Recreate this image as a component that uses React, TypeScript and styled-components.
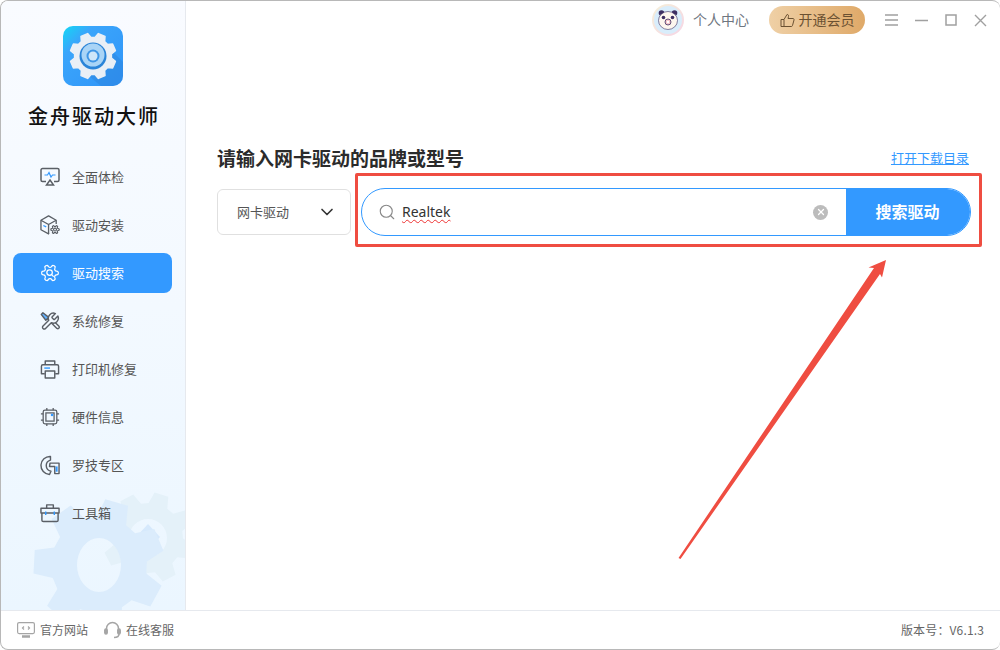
import styled, { createGlobalStyle } from "styled-components";
import { ChevronDown, Search, X } from "lucide-react";

const GlobalStyle = createGlobalStyle`
  html, body {
    margin: 0;
    padding: 0;
    background: #fff;
    font-family: "Noto Sans CJK SC", "Noto Sans", sans-serif;
  }
`;

const Window = styled.div`
  position: relative;
  box-sizing: border-box;
  width: 1000px;
  height: 650px;
  display: flex;
  flex-direction: column;
  background: #fff;
  border: 1px solid #b8b8b8;
  border-right: 0;
  border-radius: 8px;
  overflow: hidden;
`;

const Body = styled.div`
  flex: 1;
  display: flex;
  min-height: 0;
`;

const Sidebar = styled.aside`
  position: relative;
  box-sizing: border-box;
  width: 185px;
  flex: none;
  display: flex;
  flex-direction: column;
  align-items: center;
  padding-top: 25px;
  background: linear-gradient(180deg, #f9fbff 0%, #f3f9ff 50%, #ebf6ff 100%);
  border-right: 1px solid #e6e9ee;
  overflow: hidden;
`;

const Logo = styled.div`
  width: 60px;
  height: 60px;
  flex: none;
  border-radius: 10px;
  overflow: hidden;
  svg {
    display: block;
  }
`;

const Brand = styled.div`
  margin-top: 16px;
  margin-right: -2px;
  font-size: 20px;
  line-height: 28px;
  letter-spacing: 2px;
  color: #111;
  font-weight: 500;
`;

const NavList = styled.nav`
  position: relative;
  z-index: 1;
  margin-top: 27px;
  width: 159px;
  margin-left: -1px;
  display: flex;
  flex-direction: column;
  gap: 8px;
`;

const NavItem = styled.div<{ $active?: boolean }>`
  height: 40px;
  display: flex;
  align-items: center;
  gap: 12px;
  padding-left: 27px;
  border-radius: 8px;
  font-size: 13px;
  color: ${(p) => (p.$active ? "#fff" : "#555")};
  background: ${(p) => (p.$active ? "#3399ff" : "transparent")};
`;

const NavIcon = styled.span`
  width: 20px;
  height: 22px;
  flex: none;
  display: flex;
  align-items: center;
  justify-content: center;
`;

const NavLabel = styled.span`
  margin-top: -2px;
`;

const GearDecor = styled.svg`
  position: absolute;
  left: 0;
  bottom: 0;
`;

const Main = styled.main`
  flex: 1;
  min-width: 0;
  display: flex;
  flex-direction: column;
`;

const TopBar = styled.header`
  height: 38px;
  display: flex;
  align-items: center;
  justify-content: flex-end;
  padding-right: 13px;
  color: #8a8a8a;
`;

const Avatar = styled.div`
  width: 32px;
  height: 32px;
  svg {
    display: block;
  }
`;

const UserName = styled.span`
  margin: -2px 0 0 9px;
  font-size: 14px;
  color: #6f7680;
`;

const VipButton = styled.div`
  margin-left: 20px;
  width: 96px;
  height: 28px;
  display: flex;
  align-items: center;
  justify-content: center;
  gap: 4px;
  border-radius: 14px;
  font-size: 14px;
  color: #6b5132;
  background: linear-gradient(90deg, #efd0a6 0%, #dfa968 100%);
`;

const VipLabel = styled.span`
  margin-top: -2px;
`;

const WinButtons = styled.div`
  margin-left: 20px;
  display: flex;
  align-items: center;
  gap: 17px;
  svg {
    display: block;
  }
`;

const Content = styled.section`
  padding: 105px 29px 0 31px;
`;

const HeadRow = styled.div`
  display: flex;
  align-items: center;
  justify-content: space-between;
  height: 26px;
`;

const Heading = styled.h1`
  margin: 0;
  font-size: 19px;
  font-weight: 700;
  color: #2b2b2b;
`;

const FolderLink = styled.a`
  margin-right: 2px;
  font-size: 13px;
  color: #3399ff;
  text-decoration: underline;
`;

const SearchRow = styled.div`
  margin-top: 18px;
  display: flex;
  align-items: center;
  gap: 10px;
`;

const Select = styled.div`
  box-sizing: border-box;
  width: 134px;
  height: 46px;
  display: flex;
  align-items: center;
  justify-content: space-between;
  padding: 0 13px 0 19px;
  border: 1px solid #e0e0e0;
  border-radius: 6px;
  font-size: 13px;
  color: #555;
`;

const SelectLabel = styled.span`
  margin-top: -2px;
`;

const SearchBox = styled.div`
  box-sizing: border-box;
  flex: 1;
  height: 48px;
  display: flex;
  align-items: center;
  border: 1px solid #3399ff;
  border-radius: 24px;
  overflow: hidden;
`;

const SearchInput = styled.div`
  flex: 1;
  display: flex;
  align-items: center;
  padding-left: 16px;
  color: #888;
`;

const SearchText = styled.span`
  margin: -2px 0 0 6px;
  font-family: "Noto Sans", sans-serif;
  font-size: 14px;
  color: #333;
  text-decoration: underline wavy #e33;
  text-decoration-thickness: 1px;
  text-underline-offset: 2px;
`;

const ClearButton = styled.div`
  width: 15px;
  height: 15px;
  margin-right: 19px;
  display: flex;
  align-items: center;
  justify-content: center;
  border-radius: 50%;
  background: #bcbcbc;
  color: #fff;
`;

const SearchButton = styled.div`
  box-sizing: border-box;
  width: 125px;
  height: 48px;
  margin: -1px;
  padding-right: 2px;
  display: flex;
  align-items: center;
  justify-content: center;
  font-size: 16px;
  font-weight: 700;
  color: #fff;
  background: #3399ff;
`;

const SearchButtonLabel = styled.span`
  margin-top: -2px;
`;

const Footer = styled.footer`
  box-sizing: border-box;
  height: 39px;
  flex: none;
  display: flex;
  align-items: center;
  padding: 0 16px 0 16px;
  border-top: 1px solid #e6e9ee;
  font-size: 12px;
  color: #666;
`;

const FooterLink = styled.div`
  display: flex;
  align-items: center;
  gap: 5px;
  margin-right: 16px;
`;

const FooterText = styled.span`
  margin-top: -2px;
`;

const Version = styled.div`
  margin: -2px 0 0 auto;
  color: #666;
  letter-spacing: 0.15px;
`;

const HighlightBox = styled.div`
  position: absolute;
  left: 354px;
  top: 172px;
  box-sizing: border-box;
  width: 627px;
  height: 74px;
  border: 3px solid #ef4d41;
  border-radius: 2px;
`;

const ArrowLayer = styled.svg`
  position: absolute;
  left: 0;
  top: 0;
  pointer-events: none;
`;

// builds a gear outline around (cx, cy), holeY lets the hole be an ellipse
function gearPath(cx: number, cy: number, outer: number, inner: number, hole: number, teeth: number, turn = 0, holeY = hole) {
  const step = (Math.PI * 2) / teeth;
  const pts: string[] = [];
  for (let i = 0; i < teeth; i++) {
    const a = turn + i * step;
    const list: [number, number][] = [
      [inner, a - step * 0.36],
      [outer, a - step * 0.2],
      [outer, a + step * 0.2],
      [inner, a + step * 0.36],
    ];
    list.forEach(([r, t]) => {
      pts.push(`${(cx + r * Math.cos(t)).toFixed(1)} ${(cy + r * Math.sin(t)).toFixed(1)}`);
    });
  }
  const ring = `M${cx - hole} ${cy}a${hole} ${holeY} 0 1 0 ${hole * 2} 0a${hole} ${holeY} 0 1 0 ${-hole * 2} 0Z`;
  return `M${pts.join("L")}Z${ring}`;
}

const gearOutline =
  "M12.22 2h-.44a2 2 0 0 0-2 2v.18a2 2 0 0 1-1 1.73l-.43.25a2 2 0 0 1-2 0l-.15-.08a2 2 0 0 0-2.73.73l-.22.38a2 2 0 0 0 .73 2.73l.15.1a2 2 0 0 1 1 1.72v.51a2 2 0 0 1-1 1.74l-.15.09a2 2 0 0 0-.73 2.73l.22.38a2 2 0 0 0 2.73.73l.15-.08a2 2 0 0 1 2 0l.43.25a2 2 0 0 1 1 1.73V20a2 2 0 0 0 2 2h.44a2 2 0 0 0 2-2v-.18a2 2 0 0 1 1-1.73l.43-.25a2 2 0 0 1 2 0l.15.08a2 2 0 0 0 2.73-.73l.22-.39a2 2 0 0 0-.73-2.73l-.15-.08a2 2 0 0 1-1-1.74v-.5a2 2 0 0 1 1-1.74l.15-.09a2 2 0 0 0 .73-2.73l-.22-.38a2 2 0 0 0-2.73-.73l-.15.08a2 2 0 0 1-2 0l-.43-.25a2 2 0 0 1-1-1.73V4a2 2 0 0 0-2-2z";

const LogoIcon = () => (
  <svg width="60" height="60" viewBox="0 0 60 60">
    <defs>
      <linearGradient id="logoBg" x1="0" y1="0" x2="1" y2="1">
        <stop offset="0" stopColor="#12d8f5" />
        <stop offset="0.25" stopColor="#3aa5fb" />
        <stop offset="1" stopColor="#3094f8" />
      </linearGradient>
    </defs>
    <rect width="60" height="60" fill="url(#logoBg)" />
    <path d="M46 22L60 36V60H38L14 40Z" fill="#2a7fd6" opacity="0.4" />
    <path d={gearPath(30, 30, 23, 18.5, 0, 8, Math.PI / 8)} fill="#e9eff6" stroke="#e9eff6" strokeWidth="1.5" strokeLinejoin="round" />
    <circle cx="30" cy="30" r="13.5" fill="#2a84d8" />
    <circle cx="30" cy="29" r="11.5" fill="#a9d4f6" />
    <circle cx="30" cy="30" r="6.5" fill="#3f96e6" />
    <circle cx="30" cy="30" r="4.5" fill="#cfe6f9" />
  </svg>
);

const stroke = "#5a5f66";
const accent = "#3399ff";

const MonitorIcon = () => (
  <svg width="20" height="20" viewBox="0 0 20 20" fill="none" stroke={stroke} strokeWidth="1.5">
    <path d="M6 14.500H2.500a1.500 1.500 0 0 1-1.500-1.500V3a1.500 1.500 0 0 1 1.500-1.500h15A1.500 1.500 0 0 1 19 3v10a1.500 1.500 0 0 1-1.500 1.500H14" />
    <path d="M4.500 8h3l1.500-2.500 2 4.500 1.500-2h3" stroke={accent} strokeWidth="1.200" />
    <path d="M10 13l3.500 5h-7z" />
  </svg>
);

const BoxIcon = () => (
  <svg width="21" height="22" viewBox="0 0 21 22" fill="none" stroke={stroke} strokeWidth="1.400" strokeLinejoin="round">
    <path d="M9.500 20.500L1 16V6l8-4.500L17 6v4" />
    <path d="M1 6l8 4.500L17 6M9 10.500v10" />
    <path d="M3.500 11.500l3 1.500" stroke={accent} />
    <g transform="translate(10.500 10.500) scale(0.44)" strokeWidth="2.800">
      <path d={gearOutline} transform="rotate(90 12 12)" fill="#f6faff" />
      <circle cx="12" cy="12" r="3.500" />
    </g>
  </svg>
);

const GearSearchIcon = () => (
  <svg width="22" height="22" viewBox="0 0 24 24" fill="none" stroke="#fff" strokeWidth="1.500" strokeLinejoin="round">
    <path d={gearOutline} transform="rotate(90 12 12)" />
    <circle cx="11.500" cy="11.500" r="3.300" />
    <path d="M14 14l2 2" strokeLinecap="round" />
  </svg>
);

const ToolsIcon = () => (
  <svg width="21" height="21" viewBox="0 0 24 24" fill="none" stroke={stroke} strokeWidth="1.700" strokeLinejoin="round">
    <path d="M9 9l11.300 11.300a1.800 1.800 0 0 0 2.500-2.500L11.500 6.500" />
    <path d="M3.500 1.500L1.500 3.500l5.500 7 3.500-3.500z" fill={accent} fillOpacity="0.75" />
    <path d="M14.700 6.300a1 1 0 0 0 0 1.400l1.600 1.600a1 1 0 0 0 1.400 0l3.770-3.770a6 6 0 0 1-7.940 7.940l-6.910 6.910a2.120 2.120 0 0 1-3-3l6.910-6.910a6 6 0 0 1 7.940-7.940l-3.760 3.760z" fill="#f3f9ff" />
  </svg>
);

const PrinterIcon = () => (
  <svg width="21" height="21" viewBox="0 0 21 21" fill="none" stroke={stroke} strokeWidth="1.500" strokeLinejoin="round">
    <path d="M5.500 5.500V1.500h10v4" />
    <path d="M5 15H1.500V7A1.500 1.500 0 0 1 3 5.500h15A1.500 1.500 0 0 1 19.500 7v8H16" />
    <path d="M5.500 12h10v7.500h-10z" />
    <path d="M4.500 9h6" stroke={accent} />
  </svg>
);

const ChipIcon = () => (
  <svg width="22" height="22" viewBox="0 0 22 22" fill="none" stroke={stroke} strokeWidth="1.400">
    <rect x="3.500" y="3.500" width="15" height="15" rx="2" />
    <rect x="6.500" y="6.500" width="9" height="9" />
    <path d="M7.500 1v2.500M14.500 1v2.500M7.500 18.500v2.500M14.500 18.500v2.500M1 7.500h2.500M1 14.500h2.500M18.500 7.500h2.500M18.500 14.500h2.500" />
    <rect x="12" y="7.500" width="2.500" height="2.500" fill={accent} stroke="none" />
  </svg>
);

const LogiIcon = () => (
  <svg width="21" height="21" viewBox="0 0 21 21" fill="none" stroke={stroke} strokeWidth="1.500" strokeLinejoin="round">
    <path d="M11 1A9.500 9.500 0 0 0 10 20l1.500-3.500A6 6 0 0 1 11 4.800z" />
    <path d="M10.500 8H20v11h-4.500v-7.500H10z" />
    <path d="M17.500 11.500v5.500" stroke={accent} strokeWidth="2" />
  </svg>
);

const ToolboxIcon = () => (
  <svg width="21" height="20" viewBox="0 0 21 20" fill="none" stroke={stroke} strokeWidth="1.500" strokeLinejoin="round">
    <path d="M7 5V1.500h7V5" />
    <path d="M1 5h19v5H1z" />
    <path d="M2 10v7.500A1.500 1.500 0 0 0 3.500 19h14a1.500 1.500 0 0 0 1.500-1.500V10" />
    <path d="M6 8.500v3.500M15 8.500v3.500" stroke={accent} />
  </svg>
);

const PandaAvatar = () => (
  <svg width="32" height="32" viewBox="0 0 32 32">
    <defs>
      <linearGradient id="avatarRing" x1="0" y1="0" x2="1" y2="1">
        <stop offset="0" stopColor="#f5f0d8" />
        <stop offset="1" stopColor="#f6d5e6" />
      </linearGradient>
    </defs>
    <circle cx="16" cy="16" r="16" fill="url(#avatarRing)" />
    <circle cx="16" cy="16" r="14" fill="#d9edfb" />
    <circle cx="9.500" cy="9" r="2.800" fill="#3d2f63" />
    <circle cx="22.500" cy="9" r="2.800" fill="#3d2f63" />
    <ellipse cx="16" cy="16.500" rx="9.500" ry="9" fill="#fdf6ee" stroke="#3d2f63" strokeWidth="0.600" />
    <circle cx="11.500" cy="13.500" r="1.800" fill="#3d2f63" />
    <circle cx="20.500" cy="13.500" r="1.800" fill="#3d2f63" />
    <circle cx="16" cy="18" r="3" fill="#f3c4c8" stroke="#3d2f63" strokeWidth="0.800" />
    <circle cx="16" cy="18" r="1.200" fill="#fff" />
  </svg>
);

const ThumbIcon = () => (
  <svg width="15" height="15" viewBox="0 0 15 15" fill="none" stroke="#6b5132" strokeWidth="1" strokeLinejoin="round">
    <path d="M1 6.500h3v7H1z" />
    <path d="M4 6.500l3-5c1.200 0 1.800.8 1.500 2L8 5.500h5c.8 0 1.200.7 1 1.500l-1.500 5.500c-.2.700-.6 1-1.200 1H4" />
  </svg>
);

const MenuGlyph = () => (
  <svg width="13" height="12" viewBox="0 0 13 12" stroke="#a0a0a0" strokeWidth="1.500">
    <path d="M0 1h13M0 6h13M0 11h13" />
  </svg>
);

const MinGlyph = () => (
  <svg width="13" height="12" viewBox="0 0 13 12" stroke="#a0a0a0" strokeWidth="1.500">
    <path d="M0 6.500h13" />
  </svg>
);

const MaxGlyph = () => (
  <svg width="12" height="12" viewBox="0 0 12 12" fill="none" stroke="#a0a0a0" strokeWidth="1.500">
    <rect x="1" y="1" width="10" height="10" />
  </svg>
);

const CloseGlyph = () => (
  <svg width="13" height="13" viewBox="0 0 13 13" stroke="#a0a0a0" strokeWidth="1.400">
    <path d="M1 1l11 11M12 1L1 12" />
  </svg>
);

const SiteIcon = () => (
  <svg width="18" height="16" viewBox="0 0 18 16" fill="none" stroke="#a5a5a5" strokeWidth="1.200">
    <rect x="0.600" y="0.600" width="16.800" height="11" rx="1.500" />
    <path d="M7 4.500L5.500 6 7 7.500M11 4.500L12.500 6 11 7.500" />
    <path d="M5 14.500h8" strokeWidth="2.400" />
  </svg>
);

const HeadsetIcon = () => (
  <svg width="17" height="18" viewBox="0 0 17 18" fill="none" stroke="#a5a5a5" strokeWidth="1.500">
    <path d="M2.500 9V7.500a6 6 0 0 1 12 0V9" />
    <rect x="0.800" y="8" width="2.400" height="5" rx="1.200" fill="#a5a5a5" />
    <rect x="13.800" y="8" width="2.400" height="5" rx="1.200" fill="#a5a5a5" />
    <path d="M15 13c0 2-2 3.500-5 3.500" />
  </svg>
);

const navItems = [
  { label: "全面体检", icon: <MonitorIcon /> },
  { label: "驱动安装", icon: <BoxIcon /> },
  { label: "驱动搜索", icon: <GearSearchIcon />, active: true },
  { label: "系统修复", icon: <ToolsIcon /> },
  { label: "打印机修复", icon: <PrinterIcon /> },
  { label: "硬件信息", icon: <ChipIcon /> },
  { label: "罗技专区", icon: <LogiIcon /> },
  { label: "工具箱", icon: <ToolboxIcon /> },
];

const App = () => {
  return (
    <>
      <GlobalStyle />
      <Window>
        <Body>
          <Sidebar>
            <GearDecor width="184" height="130" viewBox="0 0 184 130">
              <path d={gearPath(147, 58, 46, 35, 19, 8, 0.3)} fill="#e4f1f9" fillRule="evenodd" />
              <path d="M147 44l12 13-12 13-12-13z" fill="#d6e9fc" />
              <path d={gearPath(98, 85, 66, 48, 22, 7, 0.5, 27)} fill="#dbecfc" fillRule="evenodd" />
            </GearDecor>
            <Logo>
              <LogoIcon />
            </Logo>
            <Brand>金舟驱动大师</Brand>
            <NavList>
              {navItems.map((item) => (
                <NavItem key={item.label} $active={item.active}>
                  <NavIcon>{item.icon}</NavIcon>
                  <NavLabel>{item.label}</NavLabel>
                </NavItem>
              ))}
            </NavList>
          </Sidebar>
          <Main>
            <TopBar>
              <Avatar>
                <PandaAvatar />
              </Avatar>
              <UserName>个人中心</UserName>
              <VipButton>
                <ThumbIcon />
                <VipLabel>开通会员</VipLabel>
              </VipButton>
              <WinButtons>
                <MenuGlyph />
                <MinGlyph />
                <MaxGlyph />
                <CloseGlyph />
              </WinButtons>
            </TopBar>
            <Content>
              <HeadRow>
                <Heading>请输入网卡驱动的品牌或型号</Heading>
                <FolderLink href="#">打开下载目录</FolderLink>
              </HeadRow>
              <SearchRow>
                <Select>
                  <SelectLabel>网卡驱动</SelectLabel>
                  <ChevronDown size={20} color="#333" strokeWidth={2} />
                </Select>
                <SearchBox>
                  <SearchInput>
                    <Search size={18} strokeWidth={1.5} />
                    <SearchText>Realtek</SearchText>
                  </SearchInput>
                  <ClearButton>
                    <X size={10} strokeWidth={3} />
                  </ClearButton>
                  <SearchButton>
                    <SearchButtonLabel>搜索驱动</SearchButtonLabel>
                  </SearchButton>
                </SearchBox>
              </SearchRow>
            </Content>
          </Main>
        </Body>
        <Footer>
          <FooterLink>
            <SiteIcon />
            <FooterText>官方网站</FooterText>
          </FooterLink>
          <FooterLink>
            <HeadsetIcon />
            <FooterText>在线客服</FooterText>
          </FooterLink>
          <Version>版本号：V6.1.3</Version>
        </Footer>
        <HighlightBox />
        <ArrowLayer width="1000" height="650" viewBox="0 0 1000 650">
          <path d="M677.500 557L873 267L867.500 266.500L885 259L881 276.500L879 273L679.500 558z" fill="#ef4d41" />
        </ArrowLayer>
      </Window>
    </>
  );
};

export default App;
